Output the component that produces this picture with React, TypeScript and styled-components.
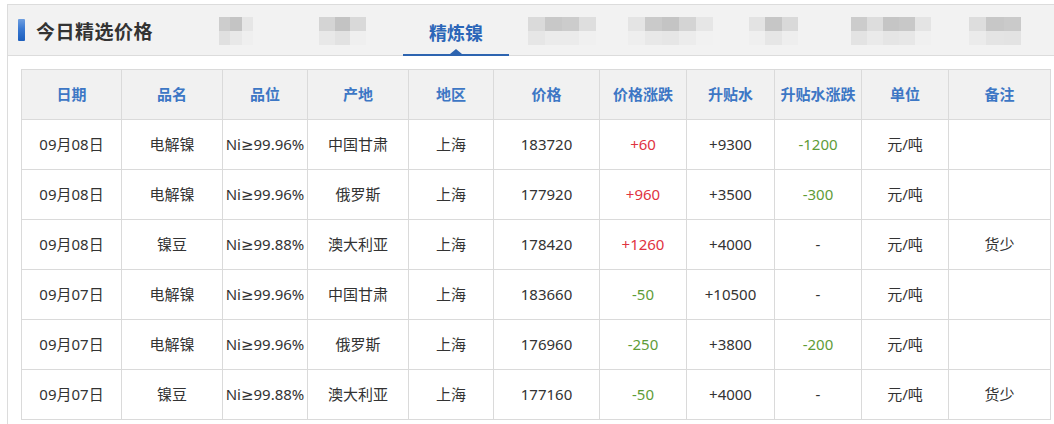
import React from 'react';
import styled, { createGlobalStyle } from 'styled-components';

const GlobalStyle = createGlobalStyle`
  html, body {
    margin: 0;
    padding: 0;
    background: #ffffff;
    overflow: hidden;
  }
  body {
    font-family: 'Noto Sans', 'DejaVu Sans', 'Noto Sans CJK SC', sans-serif;
    color: #333;
  }
`;

const Page = styled.div`
  padding: 4px 0 0 7px;
`;

const Panel = styled.section`
  width: 1060px;
  border: 1px solid #dcdcdc;
  background: #fff;
`;

const HeadBar = styled.div`
  display: flex;
  align-items: center;
  height: 50px;
  background: #f2f2f2;
  border-bottom: 1px solid #dcdcdc;
`;

const Marker = styled.span`
  width: 7px;
  height: 22px;
  margin-left: 10px;
  border-radius: 1px;
  background: linear-gradient(180deg, #6f9fe0 0%, #3a79d2 45%, #1d5fbd 100%);
`;

const Title = styled.h2`
  margin: 0 0 0 11px;
  font-family: 'Noto Sans CJK SC', sans-serif;
  font-size: 19px;
  font-weight: 700;
  color: #333;
  letter-spacing: 0.5px;
`;

const Tabs = styled.nav`
  display: flex;
  align-items: stretch;
  height: 100%;
`;

const BlurTab = styled.div<{ $gap: number }>`
  display: flex;
  align-items: center;
  padding-top: 2px;
  margin-left: ${(p) => p.$gap}px;
`;

const Mosaic = styled.div<{ $cols: number; $w: number }>`
  display: grid;
  width: ${(p) => p.$w}px;
  grid-template-columns: repeat(${(p) => p.$cols}, 1fr);
  grid-template-rows: 14px 14px;
  filter: blur(0.5px);
`;

const Tile = styled.span<{ $shade: string }>`
  background: ${(p) => p.$shade};
`;

const ActiveTab = styled.div<{ $gap: number }>`
  position: relative;
  display: flex;
  align-items: center;
  justify-content: center;
  width: 106px;
  margin-left: ${(p) => p.$gap}px;
  font-family: 'Noto Sans CJK SC', sans-serif;
  font-size: 18px;
  font-weight: 700;
  color: #2b66b8;
  padding-top: 3px;
  box-sizing: border-box;

  &::after {
    content: '';
    position: absolute;
    left: 0;
    right: 0;
    bottom: -1px;
    height: 2px;
    background: #2d64b0;
  }

  &::before {
    content: '';
    position: absolute;
    left: 50%;
    bottom: 1px;
    margin-left: -6px;
    border-left: 6px solid transparent;
    border-right: 6px solid transparent;
    border-bottom: 5px solid #2d64b0;
  }
`;

const Body = styled.div`
  padding: 13px 13px 4px;
`;

const Table = styled.table`
  width: 1030px;
  border-collapse: collapse;
  table-layout: fixed;
  font-size: 15px;
`;

const Row = styled.tr`
  height: 50px;
`;

const HeadCell = styled.th`
  background: #f1f1f1;
  border: 1px solid #dadada;
  color: #3d77c5;
  font-family: 'Noto Sans CJK SC', sans-serif;
  font-weight: 700;
  font-size: 15px;
  text-align: center;
  padding: 0 0 2px;
`;

const Cell = styled.td<{ $tone?: 'up' | 'down' }>`
  border: 1px solid #dadada;
  text-align: center;
  padding: 0 0 2px;
  white-space: nowrap;
  color: ${(p) => (p.$tone === 'up' ? '#df3341' : p.$tone === 'down' ? '#5e9c38' : '#333')};
`;

const widths = [100, 101, 85, 101, 85, 106, 87, 88, 87, 87, 102];
const heads = ['日期', '品名', '品位', '产地', '地区', '价格', '价格涨跌', '升贴水', '升贴水涨跌', '单位', '备注'];

const rows = [
  ['09月08日', '电解镍', 'Ni≥99.96%', '中国甘肃', '上海', '183720', '+60', '+9300', '-1200', '元/吨', ''],
  ['09月08日', '电解镍', 'Ni≥99.96%', '俄罗斯', '上海', '177920', '+960', '+3500', '-300', '元/吨', ''],
  ['09月08日', '镍豆', 'Ni≥99.88%', '澳大利亚', '上海', '178420', '+1260', '+4000', '-', '元/吨', '货少'],
  ['09月07日', '电解镍', 'Ni≥99.96%', '中国甘肃', '上海', '183660', '-50', '+10500', '-', '元/吨', ''],
  ['09月07日', '电解镍', 'Ni≥99.96%', '俄罗斯', '上海', '176960', '-250', '+3800', '-200', '元/吨', ''],
  ['09月07日', '镍豆', 'Ni≥99.88%', '澳大利亚', '上海', '177160', '-50', '+4000', '-', '元/吨', '货少'],
];

// blurred tabs: margin before, width, and mosaic shades (top row, bottom row)
const blurLeft = [
  { gap: 66, w: 34, top: ['#cdcdcd', '#c4c4c4', '#e6e6e6'], bottom: ['#e0e0e0', '#e8e8e8', '#efefef'] },
  { gap: 66, w: 47, top: ['#d4d4d4', '#c3c3c3', '#d9d9d9'], bottom: ['#e8e8e8', '#e2e2e2', '#efefef'] },
];
const blurRight = [
  { gap: 19, w: 68, top: ['#dadada', '#c8c8c8', '#cccccc', '#dedede'], bottom: ['#e6e6e6', '#ebebeb', '#ebebeb', '#f0f0f0'] },
  { gap: 32, w: 85, top: ['#e4e4e4', '#cacaca', '#c4c4c4', '#d4d4d4', '#e6e6e6'], bottom: ['#eeeeee', '#e8e8e8', '#e6e6e6', '#ececec', '#f1f1f1'] },
  { gap: 36, w: 49, top: ['#e3e3e3', '#c6c6c6', '#d9d9d9'], bottom: ['#efefef', '#e6e6e6', '#eeeeee'] },
  { gap: 53, w: 80, top: ['#cccccc', '#dddddd', '#c5c5c5', '#c8c8c8', '#e4e4e4'], bottom: ['#e3e3e3', '#eaeaea', '#e5e5e5', '#e7e7e7', '#f0f0f0'] },
  { gap: 38, w: 52, top: ['#dddddd', '#c7c7c7', '#cacaca'], bottom: ['#ebebeb', '#e4e4e4', '#e3e3e3'] },
];

const toneOf = (col: number, v: string): 'up' | 'down' | undefined => {
  if (col !== 6 && col !== 8) return undefined;
  if (v.startsWith('+')) return 'up';
  if (v.length > 1 && v.startsWith('-')) return 'down';
  return undefined;
};

const Blurred: React.FC<{ gap: number; w: number; top: string[]; bottom: string[] }> = ({ gap, w, top, bottom }) => (
  <BlurTab $gap={gap}>
    <Mosaic $cols={top.length} $w={w}>
      {top.map((s, i) => (
        <Tile key={'t' + i} $shade={s} />
      ))}
      {bottom.map((s, i) => (
        <Tile key={'b' + i} $shade={s} />
      ))}
    </Mosaic>
  </BlurTab>
);

const App: React.FC = () => (
  <Page>
    <GlobalStyle />
    <Panel>
      <HeadBar>
        <Marker />
        <Title>今日精选价格</Title>
        <Tabs>
          {blurLeft.map((t, i) => (
            <Blurred key={i} {...t} />
          ))}
          <ActiveTab $gap={37}>精炼镍</ActiveTab>
          {blurRight.map((t, i) => (
            <Blurred key={i} {...t} />
          ))}
        </Tabs>
      </HeadBar>
      <Body>
        <Table>
          <colgroup>
            {widths.map((w, i) => (
              <col key={i} style={{ width: w }} />
            ))}
          </colgroup>
          <thead>
            <Row>
              {heads.map((h) => (
                <HeadCell key={h}>{h}</HeadCell>
              ))}
            </Row>
          </thead>
          <tbody>
            {rows.map((r, ri) => (
              <Row key={ri}>
                {r.map((v, ci) => (
                  <Cell key={ci} $tone={toneOf(ci, v)}>
                    {v}
                  </Cell>
                ))}
              </Row>
            ))}
          </tbody>
        </Table>
      </Body>
    </Panel>
  </Page>
);

export default App;
